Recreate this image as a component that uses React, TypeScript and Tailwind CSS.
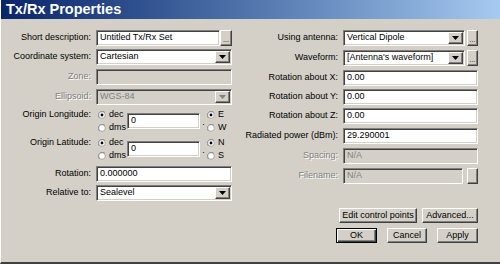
import React from 'react';

const sunken =
  'border border-t-[#808080] border-l-[#808080] border-b-white border-r-white shadow-[inset_1px_1px_0_#404040,inset_-1px_-1px_0_#d4d0c8]';
const raised =
  'border border-t-white border-l-white border-b-[#404040] border-r-[#404040] shadow-[inset_-1px_-1px_0_#808080] bg-[#d4d0c8]';

const Label = ({ text, disabled, w }: { text: string; disabled?: boolean; w: string }) => (
  <div
    className={`${w} shrink-0 text-right whitespace-nowrap ${
      disabled ? 'text-[#808080] [text-shadow:1px_1px_0_#ffffff]' : 'text-black'
    }`}
  >
    {text}
  </div>
);

const Box = ({ value, disabled, w }: { value: string; disabled?: boolean; w: string }) => (
  <div
    className={`${w} h-[16px] ${sunken} flex items-center pl-[3px] whitespace-nowrap overflow-hidden ${
      disabled ? 'bg-[#d4d0c8] text-[#808080]' : 'bg-white text-black'
    }`}
  >
    {value}
  </div>
);

const Arrow = ({ disabled }: { disabled?: boolean }) => (
  <div className={`w-[15px] h-[12px] mr-[1px] ${raised} flex items-center justify-center`}>
    <svg width="7" height="4" viewBox="0 0 7 4">
      <polygon points="0,0 7,0 3.5,4" fill={disabled ? '#808080' : '#000000'} />
    </svg>
  </div>
);

const Select = ({ value, disabled, w }: { value: string; disabled?: boolean; w: string }) => (
  <div
    className={`${w} h-[16px] ${sunken} flex items-center justify-between pl-[3px] whitespace-nowrap ${
      disabled ? 'bg-[#d4d0c8] text-[#808080]' : 'bg-white text-black'
    }`}
  >
    <span>{value}</span>
    <Arrow disabled={disabled} />
  </div>
);

const Dots = ({ w, disabled }: { w: string; disabled?: boolean }) => (
  <div className={`${w} h-[16px] ${raised} flex items-end justify-center pb-[2px] text-[7px] leading-none ${disabled ? 'text-[#d4d0c8]' : 'text-black'}`}>
    ...
  </div>
);

const Radio = ({ checked, text }: { checked?: boolean; text: string }) => (
  <div className="flex items-center h-[13px] gap-[3px]">
    <svg width="8" height="8" viewBox="0 0 8 8">
      <path d="M7 1.5A3.6 3.6 0 0 0 1.5 7" fill="none" stroke="#808080" strokeWidth="1" />
      <circle cx="4" cy="4" r="3.3" fill="#ffffff" stroke="#808080" strokeWidth="0.6" />
      {checked && <circle cx="4" cy="4" r="1.4" fill="#000000" />}
    </svg>
    <span>{text}</span>
  </div>
);

const Button = ({ text, w, def }: { text: string; w: string; def?: boolean }) =>
  def ? (
    <div
      className={`${w} h-[15px] border border-black bg-[#d4d0c8] shadow-[inset_1px_1px_0_#ffffff,inset_-1px_-1px_0_#404040,inset_-2px_-2px_0_#808080] flex items-center justify-center`}
    >
      {text}
    </div>
  ) : (
    <div className={`${w} h-[15px] ${raised} flex items-center justify-center whitespace-nowrap`}>{text}</div>
  );

const CoordRow = ({ label, a, b, top }: { label: string; a: string; b: string; top: string }) => (
  <div className={`flex ${top}`}>
    <div className="w-[90px] shrink-0 h-[13px] flex items-center justify-end">{label}</div>
    <div className="w-[36px] pl-[7px] shrink-0">
      <Radio checked text="dec" />
      <Radio text="dms" />
    </div>
    <div className="flex items-center">
      <Box value="0" w="w-[73px]" />
      <span className="w-[7px] text-center self-center mt-[4px]">.</span>
    </div>
    <div>
      <Radio checked text={a} />
      <Radio text={b} />
    </div>
  </div>
);

export default function App() {
  const row = 'flex items-center gap-[5px] h-[16px]';
  return (
    <div className="w-[500px] h-[264px] bg-[#d4d0c8] border-l border-l-white border-b-2 border-b-[#404040] overflow-hidden flex flex-col font-['Liberation_Sans',Arial,sans-serif] text-[9px]">
      <div className="h-[19px] shrink-0 bg-gradient-to-r from-[#0a246a] to-[#a6caf0] flex items-center pl-[5px]">
        <span className="text-white font-bold text-[14.5px]">Tx/Rx Properties</span>
      </div>

      <div className="flex">
        {/* left column */}
        <div className="w-[240px] shrink-0 flex flex-col">
          <div className={`${row} mt-[11px]`}>
            <Label text="Short description:" w="w-[90px]" />
            <div className="flex">
              <Box value="Untitled Tx/Rx Set" w="w-[124px]" />
              <Dots w="w-[12px]" />
            </div>
          </div>
          <div className={`${row} mt-[3px]`}>
            <Label text="Coordinate system:" w="w-[90px]" />
            <Select value="Cartesian" w="w-[136px]" />
          </div>
          <div className={`${row} mt-[4px]`}>
            <Label text="Zone:" w="w-[90px]" disabled />
            <Box value="" w="w-[136px]" disabled />
          </div>
          <div className={`${row} mt-[4px]`}>
            <Label text="Ellipsoid:" w="w-[90px]" disabled />
            <Select value="WGS-84" w="w-[136px]" disabled />
          </div>
          <CoordRow label="Origin Longitude:" a="E" b="W" top="mt-[3px]" />
          <CoordRow label="Origin Latitude:" a="N" b="S" top="mt-[2px]" />
          <div className={`${row} mt-[4px]`}>
            <Label text="Rotation:" w="w-[90px]" />
            <Box value="0.000000" w="w-[136px]" />
          </div>
          <div className={`${row} mt-[3px]`}>
            <Label text="Relative to:" w="w-[90px]" />
            <Select value="Sealevel" w="w-[136px]" />
          </div>
        </div>

        {/* right column */}
        <div className="flex flex-col w-[237px]">
          <div className={`${row} mt-[11px]`}>
            <Label text="Using antenna:" w="w-[97px]" />
            <div className="flex gap-[2px]">
              <Select value="Vertical Dipole" w="w-[122px]" />
              <Dots w="w-[11px]" />
            </div>
          </div>
          <div className={`${row} mt-[4px]`}>
            <Label text="Waveform:" w="w-[97px]" />
            <div className="flex gap-[2px]">
              <Select value="[Antenna's waveform]" w="w-[122px]" />
              <Dots w="w-[11px]" />
            </div>
          </div>
          <div className={`${row} mt-[4px]`}>
            <Label text="Rotation about X:" w="w-[97px]" />
            <Box value="0.00" w="w-[135px]" />
          </div>
          <div className={`${row} mt-[3px]`}>
            <Label text="Rotation about Y:" w="w-[97px]" />
            <Box value="0.00" w="w-[135px]" />
          </div>
          <div className={`${row} mt-[3px]`}>
            <Label text="Rotation about Z:" w="w-[97px]" />
            <Box value="0.00" w="w-[135px]" />
          </div>
          <div className={`${row} mt-[4px]`}>
            <Label text="Radiated power (dBm):" w="w-[97px]" />
            <Box value="29.290001" w="w-[135px]" />
          </div>
          <div className={`${row} mt-[4px]`}>
            <Label text="Spacing:" w="w-[97px]" disabled />
            <Box value="N/A" w="w-[135px]" disabled />
          </div>
          <div className={`${row} mt-[4px]`}>
            <Label text="Filename:" w="w-[97px]" disabled />
            <div className="flex gap-[4px]">
              <Box value="N/A" w="w-[120px]" disabled />
              <Dots w="w-[11px]" disabled />
            </div>
          </div>

          <div className="flex justify-end gap-[5px] mt-[24px]">
            <Button text="Edit control points" w="w-[78px]" />
            <Button text="Advanced..." w="w-[56px]" />
          </div>
          <div className="flex justify-end gap-[10px] mt-[5px]">
            <Button text="OK" w="w-[41px]" def />
            <Button text="Cancel" w="w-[40px]" />
            <Button text="Apply" w="w-[41px]" />
          </div>
        </div>
      </div>
    </div>
  );
}
